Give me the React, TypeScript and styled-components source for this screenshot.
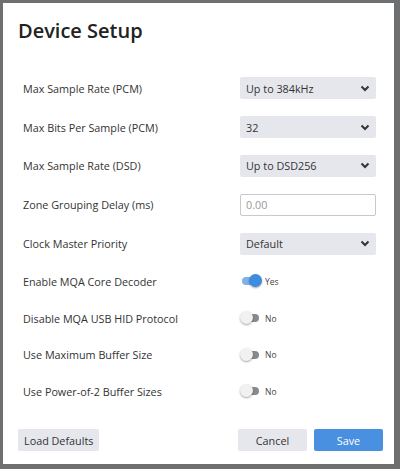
import React, { useState } from "react";
import styled, { createGlobalStyle } from "styled-components";

const GlobalStyle = createGlobalStyle`
  html, body {
    margin: 0;
    padding: 0;
    background: #6e6f71;
    font-family: "Open Sans", "Noto Sans", sans-serif;
  }
  * { box-sizing: border-box; }
`;

const Modal = styled.div`
  width: 391px;
  height: 461px;
  margin: 3px 0 0 3px;
  background: #ffffff;
  display: flex;
  flex-direction: column;
`;

const Title = styled.h1`
  margin: 0;
  padding: 14px 0 0 15px;
  height: 56px;
  font-size: 20px;
  font-weight: 600;
  color: #222;
`;

const Body = styled.div`
  display: flex;
  flex-direction: column;
  padding: 10px 18px 0 20px;
`;

const Row = styled.div<{ $compact?: boolean }>`
  display: flex;
  align-items: center;
  justify-content: space-between;
  height: ${({ $compact }) => ($compact ? "36.7px" : "38.8px")};
`;

const Label = styled.span`
  font-size: 10.8px;
  color: #333;
`;

const Control = styled.div`
  width: 136px;
  display: flex;
  align-items: center;
`;

const Select = styled.div`
  width: 136px;
  height: 22px;
  background: #e6e7ed;
  border-radius: 2px;
  display: flex;
  align-items: center;
  justify-content: space-between;
  padding: 0 6px;
  font-size: 10.8px;
  color: #333;
`;

const Input = styled.input`
  width: 136px;
  height: 22px;
  border: 1px solid #c9c9cc;
  border-radius: 2px;
  padding: 0 5px;
  font-family: inherit;
  font-size: 10.8px;
  color: #333;
  outline: none;
  &::placeholder { color: #999; }
`;

const Track = styled.button<{ $on: boolean }>`
  position: relative;
  width: 17px;
  height: 8px;
  border: none;
  padding: 0;
  border-radius: 4px;
  background: ${({ $on }) => ($on ? "#7fb0ea" : "#8a8a8a")};
  cursor: pointer;
  margin-left: 2px;
`;

const Knob = styled.span<{ $on: boolean }>`
  position: absolute;
  top: -3px;
  left: ${({ $on }) => ($on ? "7px" : "-2px")};
  width: 13px;
  height: 13px;
  border-radius: 50%;
  background: ${({ $on }) => ($on ? "#3d8ce0" : "#f1f1f1")};
  box-shadow: 0 1px 2px rgba(0, 0, 0, 0.35);
`;

const ToggleText = styled.span`
  font-size: 8.5px;
  color: #444;
  margin-left: 6px;
`;

const Footer = styled.div`
  margin-top: auto;
  display: flex;
  align-items: center;
  padding: 0 11px 13px 15px;
  gap: 7px;
`;

const Button = styled.button<{ $primary?: boolean }>`
  height: 22px;
  border: none;
  border-radius: 2px;
  padding: 0 6px;
  font-family: inherit;
  font-size: 10.8px;
  background: ${({ $primary }) => ($primary ? "#4a90e0" : "#e6e7ed")};
  color: ${({ $primary }) => ($primary ? "#ffffff" : "#333")};
  min-width: 69px;
  cursor: pointer;
`;

const Spacer = styled.div`
  flex: 1;
`;

const Chevron = () => (
  <svg width="10" height="7" viewBox="0 0 10 7">
    <path d="M1.5 1.5 L5 5 L8.5 1.5" fill="none" stroke="#333" strokeWidth="2" />
  </svg>
);

function Toggle({ initial }: { initial: boolean }) {
  const [on, setOn] = useState(initial);
  return (
    <Control>
      <Track $on={on} onClick={() => setOn((p) => !p)}>
        <Knob $on={on} />
      </Track>
      <ToggleText>{on ? "Yes" : "No"}</ToggleText>
    </Control>
  );
}

export default function App() {
  return (
    <>
      <GlobalStyle />
      <Modal>
        <Title>Device Setup</Title>
        <Body>
          <Row>
            <Label>Max Sample Rate (PCM)</Label>
            <Select>Up to 384kHz<Chevron /></Select>
          </Row>
          <Row>
            <Label>Max Bits Per Sample (PCM)</Label>
            <Select>32<Chevron /></Select>
          </Row>
          <Row>
            <Label>Max Sample Rate (DSD)</Label>
            <Select>Up to DSD256<Chevron /></Select>
          </Row>
          <Row>
            <Label>Zone Grouping Delay (ms)</Label>
            <Input placeholder="0.00" />
          </Row>
          <Row>
            <Label>Clock Master Priority</Label>
            <Select>Default<Chevron /></Select>
          </Row>
          <Row $compact>
            <Label>Enable MQA Core Decoder</Label>
            <Toggle initial={true} />
          </Row>
          <Row $compact>
            <Label>Disable MQA USB HID Protocol</Label>
            <Toggle initial={false} />
          </Row>
          <Row $compact>
            <Label>Use Maximum Buffer Size</Label>
            <Toggle initial={false} />
          </Row>
          <Row $compact>
            <Label>Use Power-of-2 Buffer Sizes</Label>
            <Toggle initial={false} />
          </Row>
        </Body>
        <Footer>
          <Button>Load Defaults</Button>
          <Spacer />
          <Button>Cancel</Button>
          <Button $primary>Save</Button>
        </Footer>
      </Modal>
    </>
  );
}
